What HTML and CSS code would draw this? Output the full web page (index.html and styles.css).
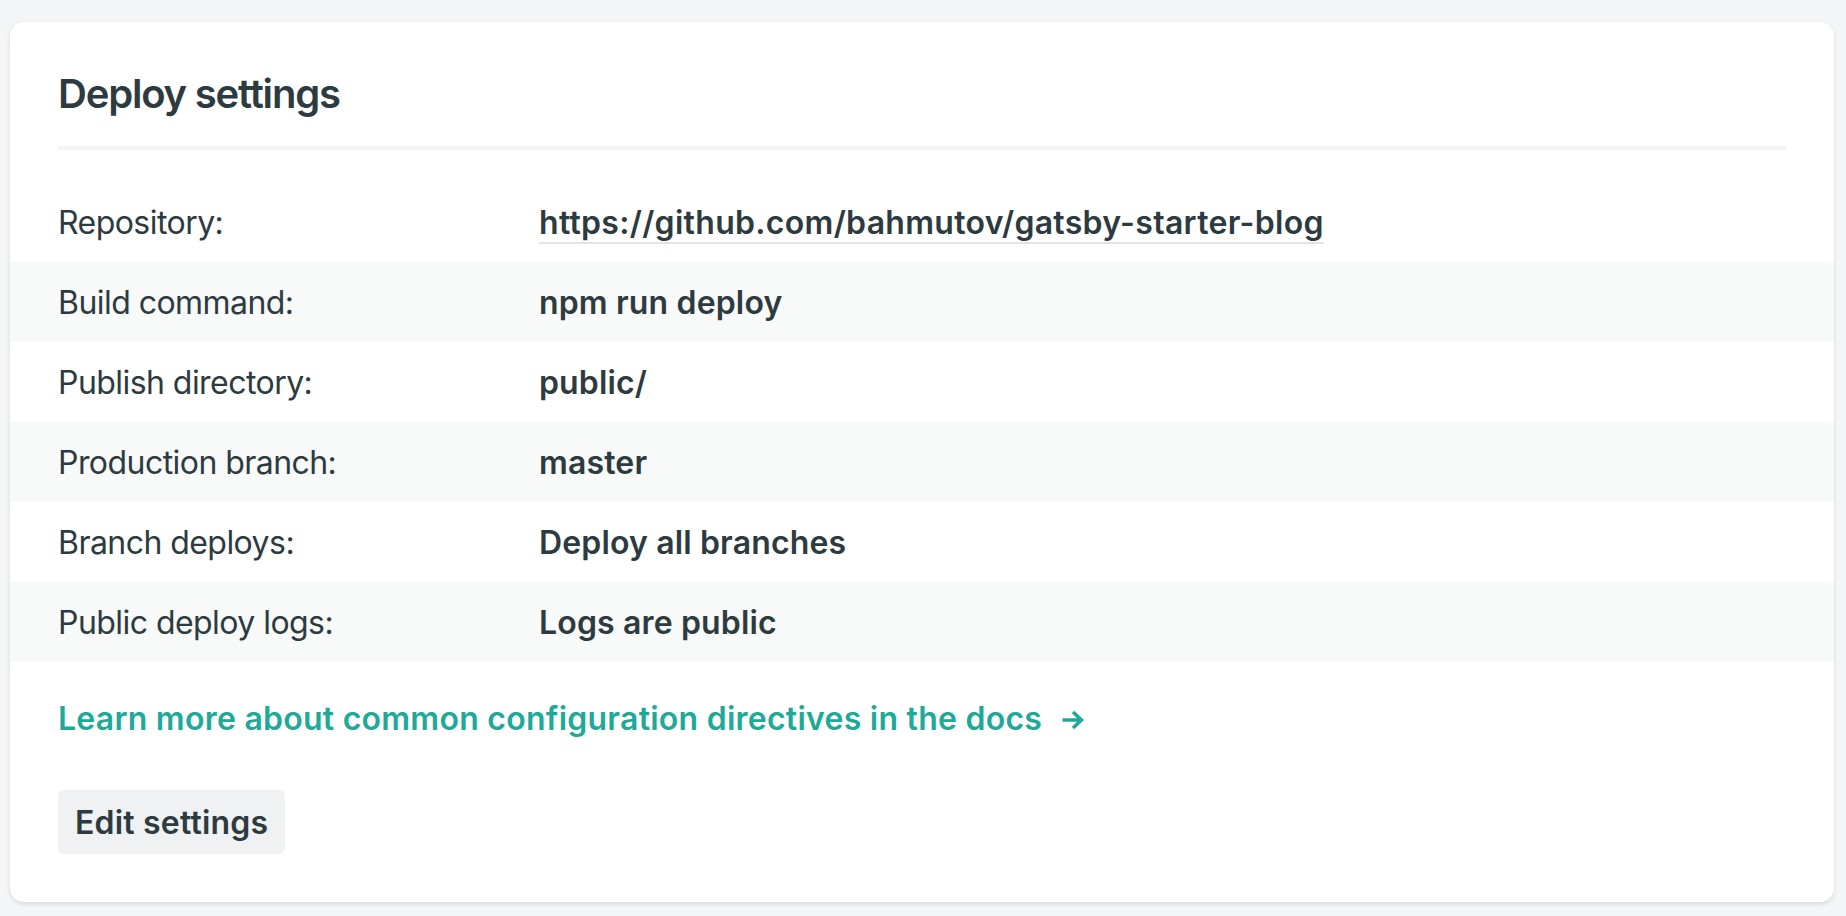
FILE: index.html
```html
<!DOCTYPE html>
<html lang="en">
<head>
<meta charset="utf-8">
<title>Deploy settings</title>
<link rel="stylesheet" href="styles.css">
</head>
<body>
<section class="card">
  <header class="card-header">
    <h2 class="card-title">Deploy settings</h2>
  </header>
  <dl class="settings">
    <div class="row">
      <dt class="label">Repository:</dt>
      <dd class="value"><a class="repo-link" href="#">https://github.com/bahmutov/gatsby-starter-blog</a></dd>
    </div>
    <div class="row row-alt">
      <dt class="label">Build command:</dt>
      <dd class="value">npm run deploy</dd>
    </div>
    <div class="row">
      <dt class="label">Publish directory:</dt>
      <dd class="value">public/</dd>
    </div>
    <div class="row row-alt">
      <dt class="label">Production branch:</dt>
      <dd class="value">master</dd>
    </div>
    <div class="row">
      <dt class="label">Branch deploys:</dt>
      <dd class="value">Deploy all branches</dd>
    </div>
    <div class="row row-alt">
      <dt class="label">Public deploy logs:</dt>
      <dd class="value">Logs are public</dd>
    </div>
  </dl>
  <p class="docs">
    <a class="docs-link" href="#">Learn more about common configuration directives in the docs<svg class="arrow" width="23" height="22" viewBox="0 0 23 22" aria-hidden="true"><path d="M1.5 11H20M12 3l8.5 8-8.5 8" fill="none" stroke="currentColor" stroke-width="3.6" stroke-linecap="butt" stroke-linejoin="miter"/></svg></a>
  </p>
  <div class="actions">
    <button class="btn" type="button">Edit settings</button>
  </div>
</section>
</body>
</html>
```

FILE: styles.css
```css
* { box-sizing: border-box; }

html, body {
  margin: 0;
  padding: 0;
}

body {
  background: #f3f5f6;
  font-family: Inter, "Noto Sans", "Liberation Sans", sans-serif;
  color: #2d3b41;
  padding: 22px 12px 14px 10px;
}

.card {
  background: #ffffff;
  border-radius: 14px;
  box-shadow: 0 2px 4px rgba(14, 30, 37, 0.12);
  padding: 47px 0 48px 0;
  min-height: 880px;
}

.card-header {
  margin: 0 48px;
  padding-bottom: 27px;
  border-bottom: 4px solid #f3f4f6;
}

.card-title {
  margin: 0;
  font-size: 40px;
  line-height: 50px;
  font-weight: 600;
  letter-spacing: -1.2px;
}

.settings {
  margin: 32px 0 0 0;
  padding: 0;
}

.row {
  display: flex;
  align-items: center;
  height: 80px;
  padding: 0 48px;
  font-size: 32px;
  letter-spacing: -0.55px;
}

.row-alt {
  background: #f8f9f9;
}

.label {
  margin: 0;
  width: 481px;
  flex: none;
  font-weight: 400;
}

.value {
  margin: 0;
  font-weight: 600;
  letter-spacing: 0.15px;
}

.repo-link {
  color: inherit;
  text-decoration: none;
  border-bottom: 2px solid #e2e3e6;
  letter-spacing: 0.3px;
}

.docs {
  margin: 37px 48px 0 48px;
  font-size: 32px;
  letter-spacing: 0.25px;
}

.docs-link {
  color: #1ea999;
  font-weight: 600;
  text-decoration: none;
}

.arrow {
  margin-left: 19px;
  vertical-align: -1px;
}

.actions {
  margin: 52px 48px 0 48px;
}

.btn {
  font: inherit;
  font-size: 32px;
  font-weight: 600;
  letter-spacing: 0.2px;
  color: #2d3b41;
  background: #f0f1f3;
  border: 0;
  border-radius: 6px;
  height: 64px;
  padding: 0 17px;
  cursor: pointer;
}
```
